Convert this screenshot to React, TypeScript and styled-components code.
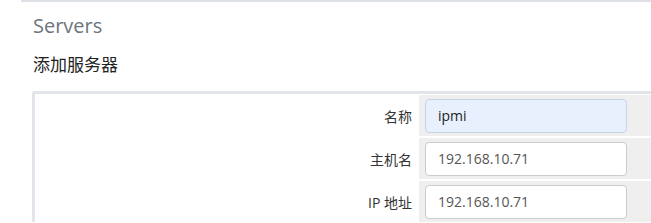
import React from 'react';
import styled, { createGlobalStyle } from 'styled-components';

const GlobalStyle = createGlobalStyle`
    body {
        margin: 0;
        background: #ffffff;
        font-family: "Open Sans", "Noto Sans CJK SC", sans-serif;
    }
`;

const Page = styled.div`
    margin-left: 21px;
    border-top: 2px solid #dee2e6;
    padding-left: 11px;
    overflow: hidden;
`;

const PageTitle = styled.h2`
    margin: 10px 0 0 1px;
    font-size: 20px;
    font-weight: 400;
    line-height: 28px;
    color: #6c757d;
`;

const SectionTitle = styled.h3`
    margin: 13px 0 0 1px;
    font-size: 17px;
    font-weight: 400;
    line-height: 24px;
    color: #222;
`;

const Panel = styled.div`
    margin-top: 14px;
    border-top: 3px solid #e2e6ea;
    border-left: 3px solid #e2e6ea;
    border-top-left-radius: 3px;
    padding-top: 1px;
    display: flex;
    flex-direction: column;
    gap: 2px;
`;

const Row = styled.div`
    display: grid;
    grid-template-columns: 384px 1fr;
    height: 41px;
`;

const Label = styled.label`
    display: flex;
    align-items: center;
    justify-content: flex-end;
    padding-right: 7px;
    font-size: 14px;
    color: #333;
`;

const Cell = styled.div`
    background: #efefef;
    display: flex;
    align-items: center;
    padding-left: 6px;
`;

const Input = styled.input<{ $autofill?: boolean }>`
    box-sizing: border-box;
    width: 202px;
    height: 34px;
    border: 1px solid ${p => (p.$autofill ? '#c9d3e3' : '#cccccc')};
    border-radius: 4px;
    background: ${p => (p.$autofill ? '#e8f0fe' : '#ffffff')};
    padding: 0 12px;
    font-family: "Open Sans", sans-serif;
    font-size: 14px;
    color: ${p => (p.$autofill ? '#222' : '#555')};
    outline: none;
`;

const fields = [
    { label: '名称', value: 'ipmi', autofill: true },
    { label: '主机名', value: '192.168.10.71', autofill: false },
    { label: 'IP 地址', value: '192.168.10.71', autofill: false },
];

export default function App() {
    return (
        <>
            <GlobalStyle />
            <Page>
                <PageTitle>Servers</PageTitle>
                <SectionTitle>添加服务器</SectionTitle>
                <Panel>
                    {fields.map(f => (
                        <Row key={f.label}>
                            <Label>{f.label}</Label>
                            <Cell>
                                <Input $autofill={f.autofill} defaultValue={f.value} />
                            </Cell>
                        </Row>
                    ))}
                </Panel>
            </Page>
        </>
    );
}
